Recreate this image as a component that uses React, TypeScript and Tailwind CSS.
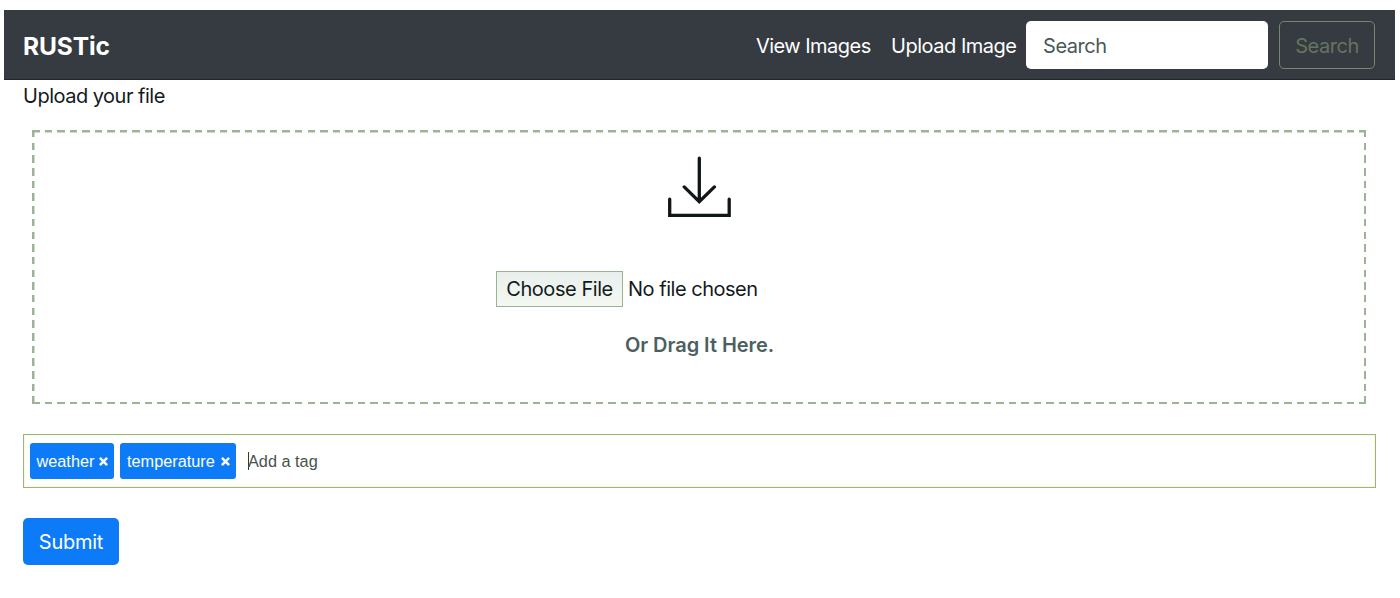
const DASHES =
  "bg-[repeating-linear-gradient(90deg,#9cb396_0_7.5px,transparent_7.5px_12.523px),repeating-linear-gradient(90deg,#9cb396_0_7.5px,transparent_7.5px_12.523px),repeating-linear-gradient(180deg,#9cb396_0_7.5px,transparent_7.5px_12.69px),repeating-linear-gradient(180deg,#9cb396_0_7.5px,transparent_7.5px_12.69px)] bg-no-repeat [background-size:100%_2.5px,100%_2.5px,2.5px_100%,2.5px_100%] [background-position:top,bottom,left,right]";

function Navbar() {
  return (
    <nav className="flex h-[70px] items-center border-b border-[#20272b] bg-[#353b41] pt-px pr-5 pl-[19px] text-white">
      <a className="mt-0.5 text-[24.5px] font-bold tracking-[-0.1px] whitespace-nowrap">RUSTic</a>
      <div className="ml-auto flex items-center text-[20px] whitespace-nowrap">
        <a className="mt-px mr-5 w-[115px] tracking-[-0.53px]">View Images</a>
        <a className="mt-px mr-[9px] w-[126px] tracking-[-0.48px]">Upload Image</a>
        <input
          type="search"
          placeholder="Search"
          className="h-12 w-[242px] rounded-[5px] bg-white px-[17px] pt-px text-[20px] tracking-[-0.45px] outline-none placeholder:text-[#4b5853] placeholder:opacity-100"
        />
        <button className="ml-[11px] h-12 w-24 rounded-[5px] border border-[#77876f] pt-px text-[20px] tracking-[-0.45px] text-[#66745f]">
          Search
        </button>
      </div>
    </nav>
  );
}

function DownloadIcon() {
  return (
    <svg className="h-[62px] w-16" viewBox="0 0 64 62" fill="none" stroke="#111719" strokeWidth="3.3">
      <path
        d="M32.3 3.2V46.5M17.2 31.9L32.3 46.7l15.1-14.8M2.7 44.2v16.2h59.5V44.2"
        strokeLinecap="round"
      />
    </svg>
  );
}

function Tag({ label, className }: { label: string; className: string }) {
  return (
    <span
      className={`flex h-9 items-center justify-between rounded-[3px] bg-[#0d7bf7] pr-[6px] font-['Liberation_Sans',sans-serif] text-[16.3px] whitespace-nowrap text-white ${className}`}
    >
      {label}
      <svg className="mt-px h-[9px] w-[9px]" viewBox="0 0 9 9" stroke="white" strokeWidth="2.5">
        <path d="M.9 .9l7.2 7.2M8.1 .9L.9 8.1" />
      </svg>
    </span>
  );
}

export default function App() {
  return (
    <div className="h-[598px] overflow-hidden bg-white pt-2.5 pr-[5px] pl-1 font-['Inter',sans-serif] text-[20px] text-[#141a1c]">
      <Navbar />
      <main className="pr-[19px] pl-[19px]">
        <p className="h-[50px] pt-px leading-[30px] tracking-[-0.5px]">Upload your file</p>
        <section className={`mr-[10px] ml-[9px] flex h-[274px] flex-col items-center pt-[25px] ${DASHES}`}>
          <DownloadIcon />
          <div className="mt-[54px] flex h-9 w-[406px] items-center whitespace-nowrap">
            <button className="h-9 w-[127px] border border-[#9cb38f] bg-linear-to-b from-[#e9efec] to-[#f3f8f1] text-[20px] tracking-[-0.45px]">
              Choose File
            </button>
            <span className="ml-[5px] tracking-[-0.48px]">No file chosen</span>
          </div>
          <strong className="mt-[23px] pl-px leading-[30px] font-semibold tracking-[-0.05px] text-[#4d5f60]">
            Or Drag It Here.
          </strong>
        </section>
        <div className="mt-[30px] flex h-[54px] items-center border border-[#9ab486] pl-[6px] shadow-[inset_0_0_0_1px_#fafbd5]">
          <Tag label="weather" className="w-[84px] pl-[6.5px]" />
          <Tag label="temperature" className="ml-1.5 w-[116px] pl-[7px]" />
          <span className="ml-3 h-[18px] w-px bg-[#303a38]" />
          <span className="-ml-px font-['Liberation_Sans',sans-serif] text-[16.3px] text-[#46524d]">Add a tag</span>
        </div>
        <button className="mt-[30px] h-[47px] w-24 rounded-[5px] bg-[#0d7bf7] pt-px text-[20px] tracking-[-0.25px] text-white">
          Submit
        </button>
      </main>
    </div>
  );
}
